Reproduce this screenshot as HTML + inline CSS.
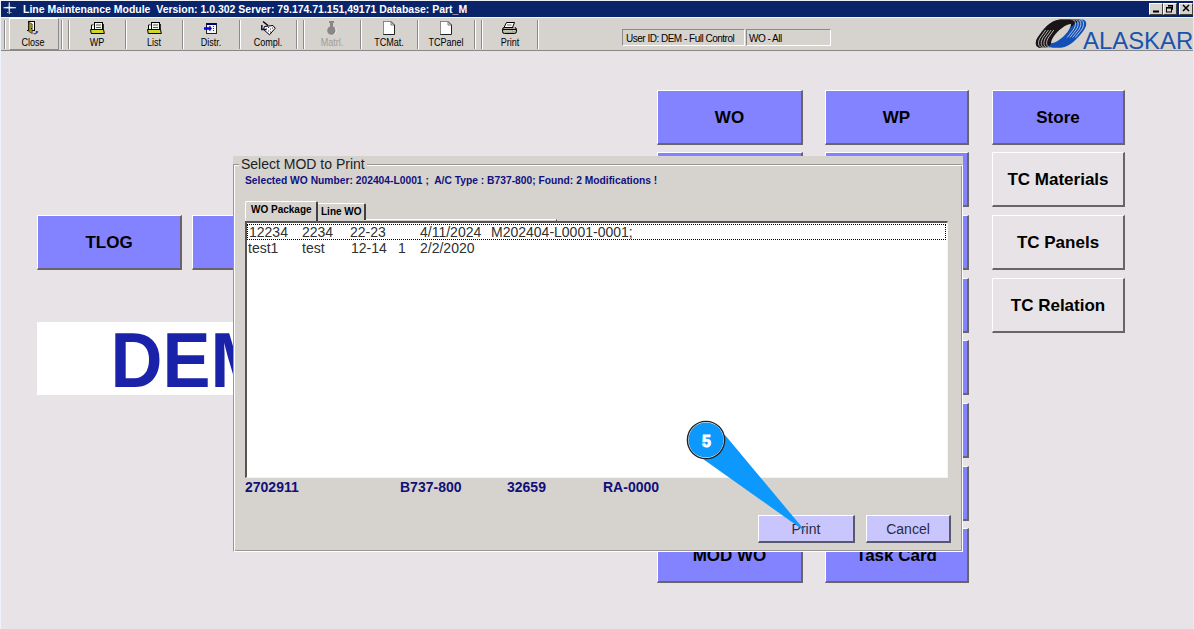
<!DOCTYPE html>
<html><head><meta charset="utf-8">
<style>
*{margin:0;padding:0;box-sizing:border-box}
html,body{width:1194px;height:629px;overflow:hidden}
body{position:relative;background:#e7e3e7;font-family:"Liberation Sans",sans-serif;}
.a{position:absolute}
#title{left:1px;top:1px;width:1192px;height:16px;background:#0a246a}
#ttext{left:23px;top:3px;color:#fff;font-weight:bold;font-size:11px;white-space:pre;line-height:12px;transform:scaleX(0.952);transform-origin:0 0}
.wb{top:3px;width:14px;height:12px;background:#d6d3ce;border-top:1px solid #fff;border-left:1px solid #fff;border-right:1px solid #404040;border-bottom:1px solid #404040}
#tb{left:1px;top:17px;width:1192px;height:34px;background:#d6d3ce;border-top:1px solid #f4f4f4;border-bottom:1px solid #888}
.sep{top:20px;width:2px;height:29px;border-left:1px solid #8c8a8c;border-right:1px solid #fff}
.tl{top:36px;font-size:10.5px;line-height:12px;color:#000;white-space:pre;text-align:center;width:56px;transform:scaleX(0.86);transform-origin:50% 0}
.btn{position:absolute;background:#8383ff;border-top:1px solid #fff;border-left:1px solid #fff;border-right:2px solid #686468;border-bottom:2px solid #686468;font-weight:bold;font-size:17px;color:#000;text-align:center;white-space:pre;height:55px;line-height:54px}
.gbtn{background:#e7e3e7}
</style></head><body>
<!-- title bar -->
<div class="a" style="left:0;top:0;width:1194px;height:1px;background:#eef0f4"></div>
<div class="a" style="left:0;top:0;width:1px;height:629px;background:#eef2fa"></div>
<div class="a" style="left:1193px;top:0;width:1px;height:629px;background:#e8eaf0"></div>
<div class="a" id="title"></div>
<svg class="a" style="left:0;top:0" width="20" height="18" viewBox="0 0 20 18">
 <path d="M3.5 7.2 L8.6 6.8 L8.8 2.2 L9.7 2.2 L9.9 6.8 L16 7.2 L16 8.2 L9.9 8.4 L9.7 14 L8.8 14 L8.6 8.4 L3.5 8.2 Z" fill="#f4f4f0"/>
 <path d="M7.2 12.5 h1 M10.4 12.5 h1" stroke="#e0e0e0" stroke-width="1"/>
</svg>
<div class="a" id="ttext">Line Maintenance Module  Version: 1.0.302 Server: 79.174.71.151,49171 Database: Part_M</div>
<div class="a wb" style="left:1149px"></div>
<div class="a wb" style="left:1163px"></div>
<div class="a wb" style="left:1179px"></div>
<svg class="a" style="left:1144px;top:0" width="50" height="18" viewBox="1144 0 50 18">
 <rect x="1153" y="10.5" width="6" height="2" fill="#000"/>
 <path d="M1168.5 5.5 H1172.5 V9.5 H1171" fill="none" stroke="#000" stroke-width="1"/>
 <rect x="1168" y="5" width="5" height="1.6" fill="#000"/>
 <rect x="1166.5" y="7.5" width="5" height="4.5" fill="none" stroke="#000" stroke-width="1"/>
 <rect x="1166" y="7" width="6" height="1.6" fill="#000"/>
 <path d="M1183 5 L1189 11 M1189 5 L1183 11" stroke="#000" stroke-width="1.5"/>
</svg>
<!-- toolbar -->
<div class="a" id="tb"></div>


<!-- toolbar content -->
<div class="a" style="left:4px;top:20px;width:2px;height:29px;border-left:1px solid #8c8a8c;border-right:1px solid #fff"></div>
<div class="a" style="left:9px;top:18px;width:50px;height:32px;border-top:1px solid #fff;border-left:1px solid #fff;border-right:1px solid #8c8a8c;border-bottom:1px solid #8c8a8c"></div>
<div class="a sep" style="left:61px"></div>
<div class="a sep" style="left:68px"></div>
<div class="a sep" style="left:125px"></div>
<div class="a sep" style="left:182px"></div>
<div class="a sep" style="left:239px"></div>
<div class="a sep" style="left:296px"></div>
<div class="a sep" style="left:303px"></div>
<div class="a sep" style="left:360px"></div>
<div class="a sep" style="left:417px"></div>
<div class="a sep" style="left:474px"></div>
<div class="a sep" style="left:481px"></div>
<div class="a sep" style="left:537px"></div>
<div class="a tl" style="left:5px">Close</div>
<div class="a tl" style="left:69px">WP</div>
<div class="a tl" style="left:126px">List</div>
<div class="a tl" style="left:183px">Distr.</div>
<div class="a tl" style="left:240px">Compl.</div>
<div class="a tl" style="left:304px;color:#a09c98">Matrl.</div>
<div class="a tl" style="left:361px">TCMat.</div>
<div class="a tl" style="left:418px">TCPanel</div>
<div class="a tl" style="left:482px">Print</div>
<!-- icons -->
<svg class="a" style="left:0;top:17px" width="560" height="20" viewBox="0 17 560 20">
 <!-- close door -->
 <rect x="28.5" y="21.5" width="6" height="9" fill="#fff" stroke="#000" stroke-width="1"/>
 <path d="M27 30.5 H29" stroke="#000" stroke-width="1"/>
 <path d="M28.8 22.3 L32.2 24 L32.2 33.5 L28.8 31.5 Z" fill="#9c9a28" stroke="#2a2a10" stroke-width="0.7"/>
 <rect x="31" y="28" width="1" height="1" fill="#000"/>
 <path d="M33.5 33.5 C35 34.2 36.5 33.5 37 31.5" stroke="#2828b8" stroke-width="1.1" fill="none"/>
 <path d="M35.5 31 L38.5 31.5 L37 33.2 Z" fill="#2828b8"/>
 <!-- WP / List -->
 <g>
  <path d="M91.5 30 V25 H93.5" stroke="#000" stroke-width="1" fill="none"/>
  <rect x="92" y="25.5" width="2" height="4" fill="#f8f8f0"/>
  <rect x="94.5" y="22.5" width="8" height="7" fill="#f4f4ee" stroke="#000" stroke-width="1"/>
  <path d="M96 25 H101 M96 27.5 H101" stroke="#555" stroke-width="1"/>
  <path d="M103.3 24 V30" stroke="#000" stroke-width="1"/>
  <path d="M90.5 29.5 H103.5 L104.3 33.5 H91.2 Z" fill="#cfd626" stroke="#000" stroke-width="1"/>
 </g>
 <g transform="translate(57 0)">
  <path d="M91.5 30 V25 H93.5" stroke="#000" stroke-width="1" fill="none"/>
  <rect x="92" y="25.5" width="2" height="4" fill="#f8f8f0"/>
  <rect x="94.5" y="22.5" width="8" height="7" fill="#f4f4ee" stroke="#000" stroke-width="1"/>
  <path d="M96 25 H101 M96 27.5 H101" stroke="#555" stroke-width="1"/>
  <path d="M103.3 24 V30" stroke="#000" stroke-width="1"/>
  <path d="M90.5 29.5 H103.5 L104.3 33.5 H91.2 Z" fill="#cfd626" stroke="#000" stroke-width="1"/>
 </g>
 <!-- Distr -->
 <rect x="206.5" y="23.5" width="10" height="10" fill="#f4f4f4" stroke="#222" stroke-width="1"/>
 <rect x="206.5" y="23.2" width="10" height="1.8" fill="#000070"/>
 <path d="M213.5 26 V32 M210 26 V32" stroke="#333" stroke-width="1" stroke-dasharray="1 1"/>
 <path d="M204 27.3 H209.5 V25.8 L212 28.5 L209.5 31 V29.7 H204 Z" fill="#0000e0"/>
 <!-- Compl -->
 <path d="M264.5 26.5 L273 25.5 L275.2 28.2 L269.5 34.8 L263.5 29.5 Z" fill="#f8f8f8" stroke="#000" stroke-width="1"/>
 <path d="M266 29 h1 M268 31 h1 M270 29 h1 M268 27.5 h1 M270 32 h1 M272 28 h1" stroke="#222" stroke-width="0.9"/>
 <path d="M261.8 25 V29.6 H266.5" stroke="#101050" stroke-width="1.5" fill="none"/>
 <path d="M263 21.5 L268 25.5" stroke="#000" stroke-width="1.4"/>
 <!-- Matrl flask -->
 <rect x="329" y="21" width="5" height="2" fill="#888"/>
 <rect x="330" y="23" width="3" height="4" fill="#888"/>
 <circle cx="331.5" cy="30.5" r="4.3" fill="#888"/>
 <path d="M335.5 28 C336.5 30 336 33 334 34.5" stroke="#fff" stroke-width="0.8" fill="none"/>
 <!-- TCMat page -->
 <g>
  <path d="M383.5 21.5 H391 L394.5 25 V34.5 H383.5 Z" fill="#fff" stroke="#222" stroke-width="1"/>
  <path d="M383.5 34 V21.5 H391" stroke="#888" stroke-width="1" fill="none"/>
  <path d="M391 21.5 V25 H394.5" stroke="#555" stroke-width="0.8" fill="none"/>
 </g>
 <g transform="translate(57 0)">
  <path d="M383.5 21.5 H391 L394.5 25 V34.5 H383.5 Z" fill="#fff" stroke="#222" stroke-width="1"/>
  <path d="M383.5 34 V21.5 H391" stroke="#888" stroke-width="1" fill="none"/>
  <path d="M391 21.5 V25 H394.5" stroke="#555" stroke-width="0.8" fill="none"/>
 </g>
 <!-- Print -->
 <path d="M506.5 22.5 H514.5 L512.5 27.5 H504 Z" fill="#fff" stroke="#000" stroke-width="1"/>
 <path d="M507 25 H511.5" stroke="#666" stroke-width="1"/>
 <rect x="502.5" y="27.5" width="14" height="6" rx="2" fill="#a8a898" stroke="#000" stroke-width="1"/>
 <path d="M503 29.5 H516" stroke="#000" stroke-width="1"/>
 <path d="M504 31 H512" stroke="#d8d8c8" stroke-width="1"/>
 <path d="M513 27 l1 1 l1 -1 M513 30 l1 1 l1 -1" stroke="#fff" stroke-width="0.6" fill="none"/>
</svg>
<!-- user id boxes -->
<div class="a" style="left:622px;top:29px;width:123px;height:17px;border-top:1px solid #8c8a8c;border-left:1px solid #8c8a8c;border-right:1px solid #fff;border-bottom:1px solid #fff;font-size:10px;line-height:17px;padding-left:3px;white-space:pre;letter-spacing:-0.5px;color:#000">User ID: DEM - Full Control</div>
<div class="a" style="left:746px;top:29px;width:85px;height:17px;border-top:1px solid #8c8a8c;border-left:1px solid #8c8a8c;border-right:1px solid #fff;border-bottom:1px solid #fff;font-size:10px;line-height:17px;padding-left:2px;white-space:pre;letter-spacing:-0.5px;color:#000">WO - All</div>
<!-- logo -->
<svg class="a" style="left:1030px;top:17px" width="164" height="34" viewBox="1030 17 164 34">
 <defs>
  <clipPath id="cpk"><path d="M1028 17 L1028 50 L1044 50 L1083 17 Z"/></clipPath>
  <clipPath id="cpo"><path d="M1060 19.5 L1082 19.5 C1087 19.5 1087.5 25 1084 30 C1079 37 1071 46.5 1061 47.8 L1041 47.8 C1035 47.8 1034.5 42 1038 37 C1043 29.5 1050 20.5 1060 19.5 Z"/></clipPath>
 </defs>
 <g clip-path="url(#cpo)">
  <rect x="1030" y="17" width="60" height="34" fill="#1250b8"/>
  <rect x="1030" y="17" width="60" height="34" fill="#1a1414" clip-path="url(#cpk)"/>
  <g fill="none" stroke="#e4e4e4" stroke-width="0.75">
   <path d="M1043.7 47.8 C1037.7 47.8 1037.2 42 1040.7 37 L1045.7 30"/><path d="M1079.3 19.5 C1084.3 19.5 1084.8 25 1081.3 30 L1075.3 37.5"/><path d="M1046.4 47.8 C1040.4 47.8 1039.9 42 1043.4 37 L1048.4 30"/><path d="M1076.6 19.5 C1081.6 19.5 1082.1 25 1078.6 30 L1072.6 37.5"/><path d="M1049.1 47.8 C1043.1 47.8 1042.6 42 1046.1 37 L1051.1 30"/><path d="M1073.9 19.5 C1078.9 19.5 1079.4 25 1075.9 30 L1069.9 37.5"/><path d="M1051.8 47.8 C1045.8 47.8 1045.3 42 1048.8 37 L1053.8 30"/><path d="M1071.2 19.5 C1076.2 19.5 1076.7 25 1073.2 30 L1067.2 37.5"/>
  </g>
 </g>
 <path d="M1051 43.5 C1051 37 1062 25 1071 24 C1071 30 1060 42 1051 43.5 Z" fill="#d6d3ce"/>
 <text x="1083" y="49" font-family="Liberation Sans" font-size="24.5" fill="#1a52b0" transform="translate(1083 0) scale(0.975 1) translate(-1083 0)">ALASKAR</text>
</svg>

<!-- main buttons -->
<div class="btn" style="left:37px;top:215px;width:145px">TLOG</div>
<div class="btn" style="left:192px;top:215px;width:145px"></div>
<div class="a" style="left:37px;top:322px;width:300px;height:73px;background:#fff"></div>
<div class="a" style="left:110.5px;top:317.3px;font-size:72px;font-weight:bold;color:#1b22aa;line-height:80px;transform:scale(1,1.075);transform-origin:0 0">DEMO</div>

<div class="btn" style="left:657px;top:90px;width:146px">WO</div>
<div class="btn" style="left:825px;top:90px;width:144px">WP</div>
<div class="btn" style="left:992px;top:90px;width:133px">Store</div>
<div class="btn" style="left:657px;top:152px;width:146px"></div>
<div class="btn" style="left:825px;top:152px;width:144px"></div>
<div class="btn gbtn" style="left:992px;top:152px;width:133px">TC Materials</div>
<div class="btn" style="left:657px;top:215px;width:146px"></div>
<div class="btn" style="left:825px;top:215px;width:144px"></div>
<div class="btn gbtn" style="left:992px;top:215px;width:133px">TC Panels</div>
<div class="btn" style="left:657px;top:278px;width:146px"></div>
<div class="btn" style="left:825px;top:278px;width:144px"></div>
<div class="btn gbtn" style="left:992px;top:278px;width:133px">TC Relation</div>
<div class="btn" style="left:657px;top:340px;width:146px"></div>
<div class="btn" style="left:825px;top:340px;width:144px"></div>
<div class="btn" style="left:657px;top:403px;width:146px"></div>
<div class="btn" style="left:825px;top:403px;width:144px"></div>
<div class="btn" style="left:657px;top:466px;width:146px"></div>
<div class="btn" style="left:825px;top:466px;width:144px"></div>
<div class="btn" style="left:657px;top:528px;width:146px">MOD WO</div>
<div class="btn" style="left:825px;top:528px;width:144px">Task Card</div>


<!-- dialog -->
<div class="a" style="left:233px;top:156px;width:730px;height:396px;background:#d6d3ce"></div>
<div class="a" style="left:233px;top:164px;width:729px;height:387px;border:1px solid #989694"></div>
<div class="a" style="left:234px;top:165px;width:729px;height:387px;border:1px solid #fff"></div>
<div class="a" style="left:239px;top:156px;padding:0 2px 0 2px;background:#d6d3ce;font-size:14px;line-height:16px;color:#222;white-space:pre;height:14px">Select MOD to Print</div>
<div class="a" style="left:245px;top:174px;font-size:11px;font-weight:bold;color:#101080;white-space:pre;line-height:12px;transform:scaleX(0.934);transform-origin:0 0">Selected WO Number: 202404-L0001 ;  A/C Type : B737-800; Found: 2 Modifications !</div>
<!-- tabs -->
<div class="a" style="left:245px;top:219px;width:312px;height:3px;border-top:1px solid #fff;border-bottom:1px solid #6a6a6a;border-right:1px solid #404040"></div>
<div class="a" style="left:245px;top:201px;width:73px;height:20px;background:#d6d3ce;border-top:1px solid #fff;border-left:1px solid #fff;border-right:2px solid #404040;border-radius:2px 2px 0 0"></div>
<div class="a" style="left:251px;top:204px;font-size:10px;font-weight:bold;line-height:12px;white-space:pre;color:#000">WO Package</div>
<div class="a" style="left:318px;top:203px;width:48px;height:17px;background:#d6d3ce;border-top:1px solid #fff;border-right:2px solid #404040;border-radius:0 2px 0 0"></div>
<div class="a" style="left:321px;top:206px;font-size:10px;font-weight:bold;line-height:12px;white-space:pre;color:#000">Line WO</div>
<!-- listbox -->
<div class="a" style="left:245px;top:221px;width:703px;height:257px;background:#fff;border-top:2px solid #555;border-left:2px solid #555;border-right:1px solid #f4f4f4;border-bottom:1px solid #f4f4f4"></div>
<div class="a" style="left:247px;top:224px;width:699px;height:16px;border:1px dotted #000"></div>
<div class="a" style="left:249px;top:224px;font-size:14px;line-height:16px;color:#303030;white-space:pre">12234</div>
<div class="a" style="left:302px;top:224px;font-size:14px;line-height:16px;color:#303030;white-space:pre">2234</div>
<div class="a" style="left:350px;top:224px;font-size:14px;line-height:16px;color:#303030;white-space:pre">22-23</div>
<div class="a" style="left:420px;top:224px;font-size:14px;line-height:16px;color:#303030;white-space:pre">4/11/2024</div>
<div class="a" style="left:491px;top:224px;font-size:14px;line-height:16px;color:#303030;white-space:pre">M202404-L0001-0001;</div>
<div class="a" style="left:248px;top:240px;font-size:14px;line-height:16px;color:#303030;white-space:pre">test1</div>
<div class="a" style="left:302px;top:240px;font-size:14px;line-height:16px;color:#303030;white-space:pre">test</div>
<div class="a" style="left:351px;top:240px;font-size:14px;line-height:16px;color:#303030;white-space:pre">12-14</div>
<div class="a" style="left:398px;top:240px;font-size:14px;line-height:16px;color:#303030;white-space:pre">1</div>
<div class="a" style="left:420px;top:240px;font-size:14px;line-height:16px;color:#303030;white-space:pre">2/2/2020</div>
<!-- info row -->
<div class="a" style="left:245px;top:479px;font-size:14px;font-weight:bold;line-height:16px;color:#10107a;white-space:pre">2702911</div>
<div class="a" style="left:400px;top:479px;font-size:14px;font-weight:bold;line-height:16px;color:#10107a;white-space:pre">B737-800</div>
<div class="a" style="left:507px;top:479px;font-size:14px;font-weight:bold;line-height:16px;color:#10107a;white-space:pre">32659</div>
<div class="a" style="left:603px;top:479px;font-size:14px;font-weight:bold;line-height:16px;color:#10107a;white-space:pre">RA-0000</div>
<!-- buttons -->
<div class="a" style="left:758px;top:515px;width:97px;height:28px;background:#c8c6fc;border-top:1px solid #fff;border-left:1px solid #fff;border-right:2px solid #585868;border-bottom:2px solid #585868;font-size:14px;line-height:27px;text-align:center;color:#2a2a48">Print</div>
<div class="a" style="left:866px;top:515px;width:85px;height:28px;background:#c8c6fc;border-top:1px solid #fff;border-left:1px solid #fff;border-right:2px solid #585868;border-bottom:2px solid #585868;font-size:14px;line-height:27px;text-align:center;color:#2a2a48">Cancel</div>
<!-- callout -->
<svg class="a" style="left:0;top:0" width="1194" height="629" viewBox="0 0 1194 629">
 <path d="M725 435 L703 459 L806 532 Z" fill="#0c98fc"/>
 <circle cx="706" cy="440" r="18" fill="#0c98fc" stroke="#fff" stroke-width="1"/>
 <circle cx="706" cy="440" r="18.6" fill="none" stroke="#222" stroke-width="1.4"/>
 <text x="706.5" y="447" font-family="Liberation Sans" font-weight="bold" font-size="16" fill="#fff" stroke="#fff" stroke-width="0.9" text-anchor="middle">5</text>
</svg>
</body></html>
